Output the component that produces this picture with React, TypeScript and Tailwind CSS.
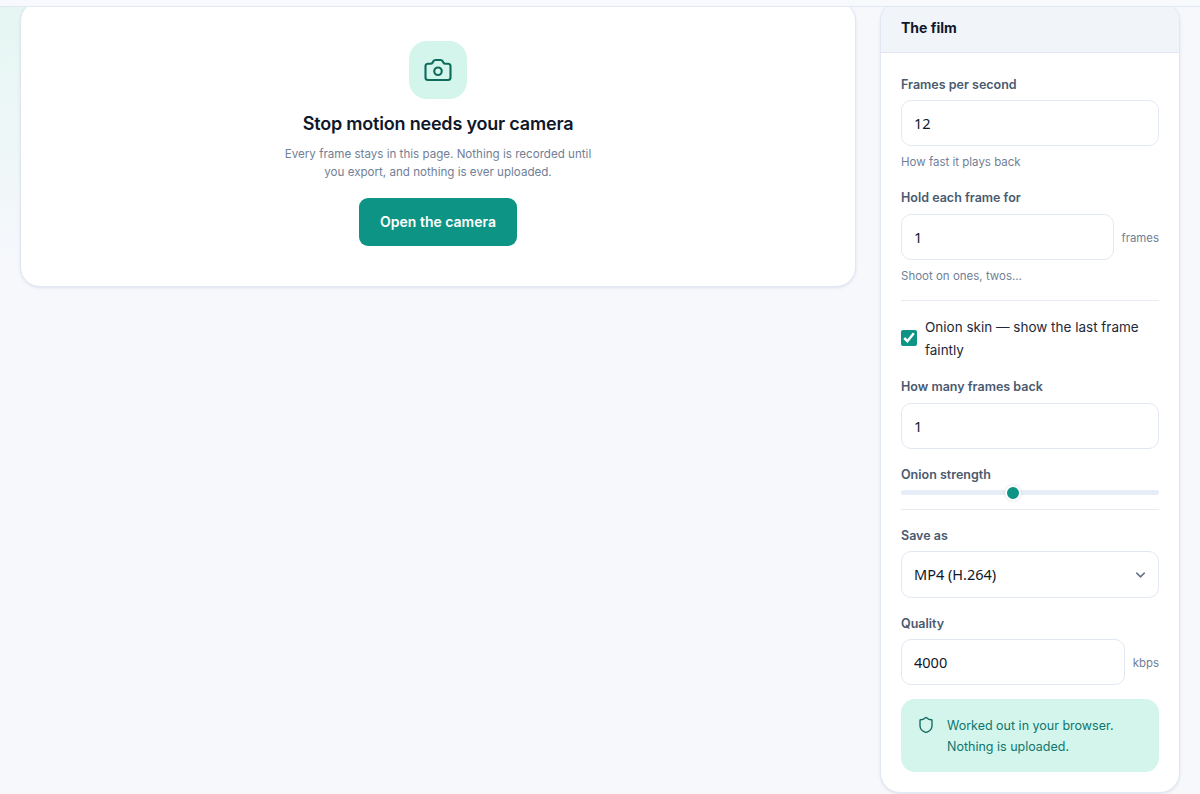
import React from "react";
import { Camera, ChevronDown, Shield } from "lucide-react";

const labelClass = "block text-[12.5px] leading-[18px] font-semibold text-[#4a5a70]";
const inputClass =
  "h-[46px] w-full min-w-0 rounded-[10px] border border-[#e2e8f3] bg-white px-[12px] font-['Noto_Sans',sans-serif] text-[14.5px] text-[#0f172a] outline-none";
const hintClass = "text-[11.5px] leading-[16px] text-[#718096]";
const unitClass = "mt-[4px] shrink-0 text-[11.4px] text-[#718096]";

function Divider() {
  return <div className="h-px bg-[#e6ebf4]" />;
}

export default function App() {
  return (
    <div className="h-[794px] overflow-hidden bg-[#f6f8fc] bg-[radial-gradient(circle_at_0%_0%,#e4f6f2_0,#f6f8fc_260px)] font-['Inter',sans-serif]">
      <div className="relative z-10 h-[7px] border-b border-[#e2e8f2] bg-[#f7f9fd]" />

      <main className="-mt-[6px] flex items-start gap-6 px-5">
        <section className="flex h-[286px] flex-1 flex-col items-center rounded-[20px] border border-[#e2e8f3] bg-white pt-[39px] shadow-[0_1px_3px_rgba(30,50,90,0.1)]">
          <div className="flex size-[58px] items-center justify-center rounded-[18px] bg-[#d3f5ec]">
            <Camera className="size-[30px] text-[#0f6b5c]" strokeWidth={1.7} />
          </div>
          <h1 className="mt-[12px] text-[18px] leading-[25px] font-semibold tracking-[-0.2px] text-[#0f172a]">
            Stop motion needs your camera
          </h1>
          <p className="mt-[9px] w-[340px] text-center text-[11.6px] leading-[18px] text-[#718096]">
            Every frame stays in this page. Nothing is recorded until
            <br />
            you export, and nothing is ever uploaded.
          </p>
          <button className="mt-[17px] h-12 w-[158px] rounded-[9px] bg-[#0d9484] pb-[1px] text-[14px] font-semibold text-white">
            Open the camera
          </button>
        </section>

        <aside className="h-[792px] w-[300px] shrink-0 overflow-hidden rounded-[20px] border border-[#e2e8f3] bg-white shadow-[0_1px_3px_rgba(30,50,90,0.1)]">
          <div className="flex h-[51px] items-center border-b border-[#e2e8f3] bg-[#f1f4f9] px-5">
            <h2 className="text-[14px] font-bold text-[#0f172a]">The film</h2>
          </div>

          <div className="flex flex-col px-5 pt-[23px]">
            <label className={labelClass}>Frames per second</label>
            <input className={`${inputClass} mt-[6px]`} readOnly value="12" />
            <p className={`${hintClass} mt-[8px]`}>How fast it plays back</p>

            <label className={`${labelClass} mt-[19px]`}>Hold each frame for</label>
            <div className="mt-[7px] flex items-center gap-[7px]">
              <input className={inputClass} readOnly value="1" />
              <span className={unitClass}>frames</span>
            </div>
            <p className={`${hintClass} mt-[8px]`}>Shoot on ones, twos…</p>

            <div className="mt-[16px]">
              <Divider />
            </div>

            <label className="mt-[15px] flex items-center gap-2 text-[13.5px] leading-[23px] text-[#1e293b]">
              <input type="checkbox" readOnly checked className="mb-[2px] size-4 shrink-0 accent-[#0d9484]" />
              <span>Onion skin — show the last frame faintly</span>
            </label>

            <label className={`${labelClass} mt-[16px]`}>How many frames back</label>
            <input className={`${inputClass} mt-[7px]`} readOnly value="1" />

            <label className={`${labelClass} mt-[17px]`}>Onion strength</label>
            <input
              type="range"
              readOnly
              min={0}
              max={100}
              value={43}
              className="mt-[6px] block h-[5px] w-full appearance-none rounded-full bg-[#e6edf6] [&::-webkit-slider-thumb]:size-[16px] [&::-webkit-slider-thumb]:appearance-none [&::-webkit-slider-thumb]:rounded-full [&::-webkit-slider-thumb]:border-2 [&::-webkit-slider-thumb]:border-white [&::-webkit-slider-thumb]:bg-[#0d9484] [&::-webkit-slider-thumb]:shadow-[0_0_2px_rgba(15,23,42,0.2)]"
            />

            <div className="mt-[14px]">
              <Divider />
            </div>

            <label className={`${labelClass} mt-[17px]`}>Save as</label>
            <div className="relative mt-[6px]">
              <select className={`${inputClass} h-[47px] appearance-none`}>
                <option>MP4 (H.264)</option>
              </select>
              <ChevronDown
                className="pointer-events-none absolute top-1/2 right-[11px] size-[15px] -translate-y-1/2 text-[#64748b]"
                strokeWidth={2.4}
              />
            </div>

            <label className={`${labelClass} mt-[17px]`}>Quality</label>
            <div className="mt-[6px] flex items-center gap-2">
              <input className={inputClass} readOnly value="4000" />
              <span className={unitClass}>kbps</span>
            </div>

            <div className="mt-[14px] flex h-[73px] items-start gap-3 rounded-[14px] bg-[#d3f5ec] pl-[16px] pt-[16px] text-[12.5px] leading-[21px] text-[#0f766e]">
              <Shield className="mt-[1px] size-[18px] shrink-0 text-[#0f6b5c]" strokeWidth={1.8} />
              <p>
                Worked out in your browser.
                <br />
                Nothing is uploaded.
              </p>
            </div>
          </div>
        </aside>
      </main>
    </div>
  );
}
